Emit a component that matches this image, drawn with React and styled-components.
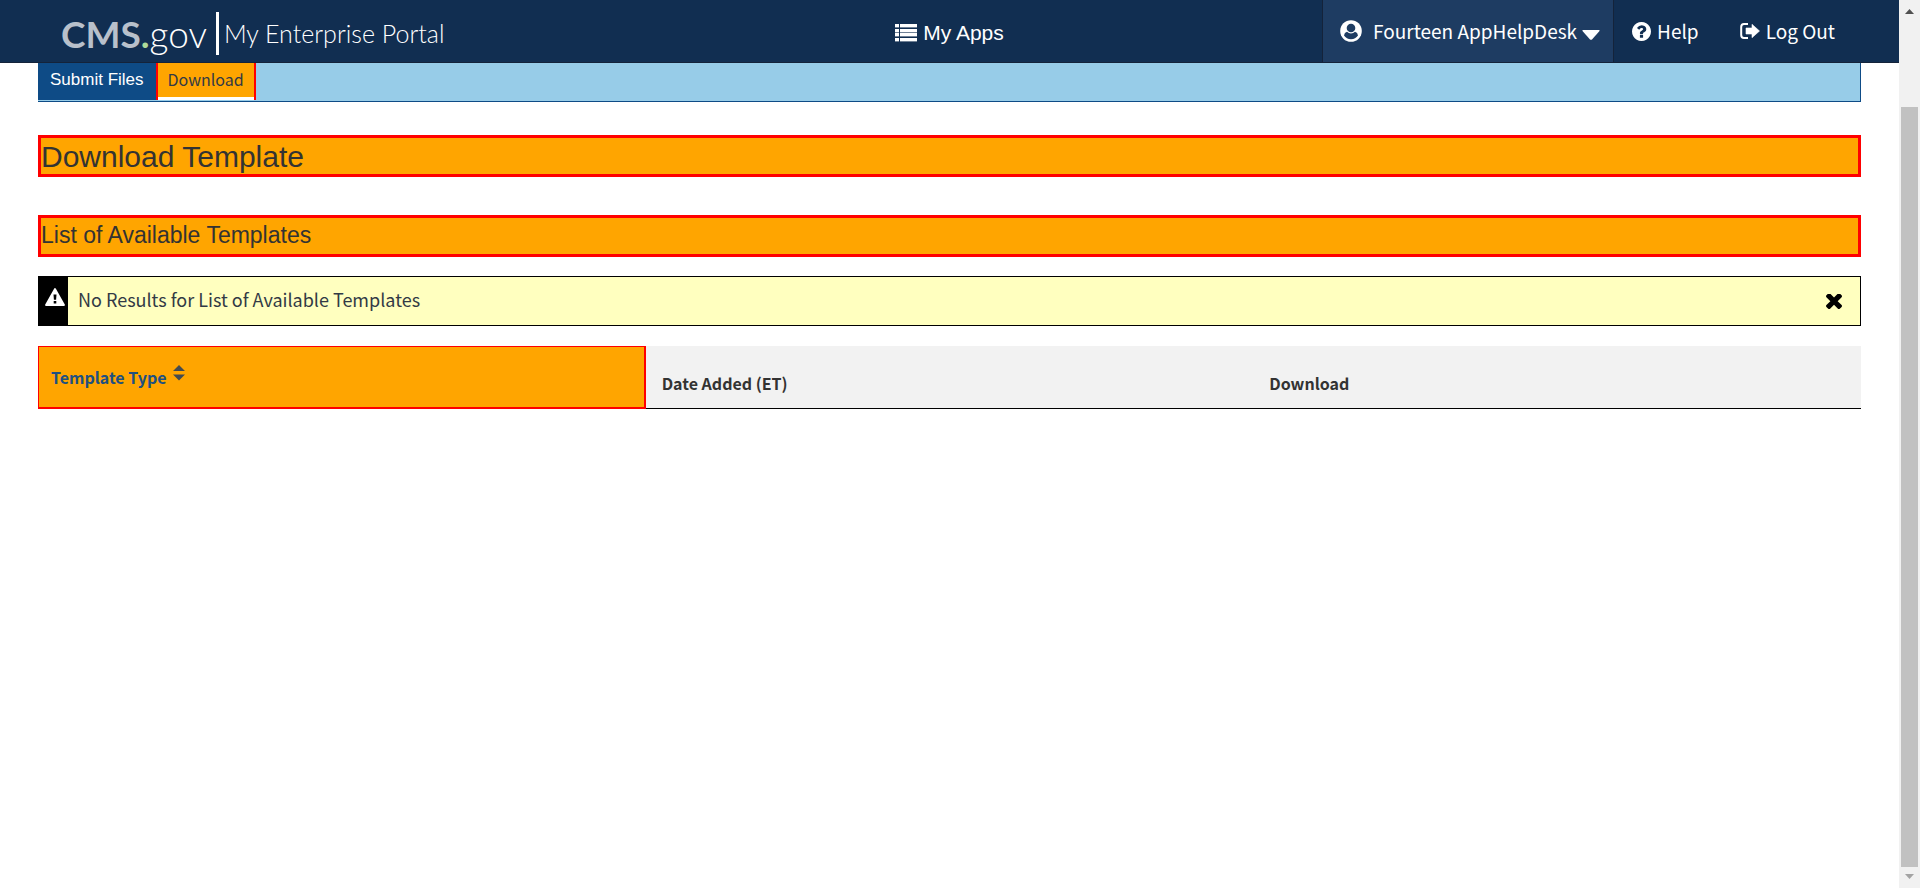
import React from 'react';
import styled, { createGlobalStyle } from 'styled-components';

const arial = '"Liberation Sans", Arial, sans-serif';
const source = '"Source Sans Pro", "Noto Sans CJK SC", sans-serif';

const GlobalStyle = createGlobalStyle`
  *, *::before, *::after { box-sizing: border-box; }
  body { margin: 0; background: #fff; color: #323a45; font-family: ${source}; }
  h1, h2, p { margin: 0; }
  a { color: inherit; text-decoration: none; }
  svg { display: block; flex: none; }
`;

const Shell = styled.div`
  display: flex;
  min-height: 100vh;
`;

const Page = styled.div`
  flex: 1;
  min-width: 0;
`;

const Header = styled.header`
  display: grid;
  grid-template-columns: 1fr auto 1fr;
  height: 63px;
  background: #112e51;
  border-bottom: 1px solid #14233a;
  color: #fff;
`;

const Brand = styled.a`
  display: flex;
  align-items: center;
  padding: 5px 0 0 61px;
  font-family: Lato, sans-serif;
  white-space: nowrap;
`;

const BrandMark = styled.span`
  font-size: 37px;
  line-height: 44px;
  font-weight: 300;
`;

const BrandStrong = styled.span`
  font-weight: 700;
  color: #b8c0cb;
`;

const BrandDot = styled.span`
  font-weight: 700;
  color: #aedb9a;
`;

const BrandRule = styled.span`
  width: 3px;
  height: 43px;
  margin: 0 5px 0 9px;
  background: #fff;
`;

const BrandName = styled.span`
  padding-bottom: 2px;
  font-size: 25px;
  line-height: 30px;
  font-weight: 300;
`;

const AppsLink = styled.a`
  display: flex;
  align-items: center;
  gap: 6px;
  padding-top: 3px;
  font: 500 21px/30px ${arial};
`;

const Account = styled.nav`
  display: flex;
  justify-content: flex-end;
  padding-right: 41px;
`;

const HeaderItem = styled.a`
  display: flex;
  align-items: center;
  gap: 6px;
  padding: 0 23px 0 18px;
  font-size: 19px;
  line-height: 30px;
  white-space: nowrap;
`;

const UserMenu = styled.button`
  display: flex;
  align-items: center;
  padding: 0 13px 0 17px;
  border: 0 solid #14233a;
  border-width: 0 1px;
  background: #1e3c62;
  color: #fff;
  font: 19px/30px ${source};
  white-space: nowrap;
`;

const UserName = styled.span`
  margin: 0 5px 0 11px;
`;

const Main = styled.main`
  padding: 0 38px;
`;

const Tabs = styled.nav`
  display: flex;
  height: 39px;
  padding-bottom: 1px;
  border: 1px solid #0e4b86;
  border-width: 0 1px 1px 0;
  background: #97cce8;
`;

const Tab = styled.a`
  padding: 2px 12px 0;
  font: 500 17px/30px ${arial};
  background: #0e4b86;
  color: #fff;
`;

const ActiveTab = styled(Tab)`
  padding: 1px 10px 0;
  border: solid red;
  border-width: 0 2px;
  background: orange;
  box-shadow: inset 0 -3px #fff;
  color: #323a45;
  font: 16px/30px ${source};
`;

const Title = styled.h1`
  margin-top: 33px;
  padding-top: 1px;
  border: 3px solid red;
  background: orange;
  color: #333;
  font: 400 30px/35px ${arial};
`;

const Subtitle = styled.h2`
  margin-top: 38px;
  padding-bottom: 2px;
  border: 3px solid red;
  background: orange;
  color: #333;
  font: 400 23px/34px ${arial};
`;

const Alert = styled.div`
  display: flex;
  height: 50px;
  margin-top: 19px;
  border: 1px solid #000;
  background: #ffffbf;
`;

const AlertBadge = styled.span`
  width: 29px;
  padding: 10px 0 0 6px;
  background: #000;
  color: #fff;
`;

const AlertText = styled.p`
  flex: 1;
  padding: 7px 0 0 10px;
  font-size: 18px;
  line-height: 30px;
`;

const CloseButton = styled.button`
  display: flex;
  align-items: center;
  padding: 1px 18px 0;
  border: 0;
  background: none;
  color: #000;
`;

const Table = styled.table`
  width: 100%;
  margin-top: 20px;
  border-collapse: separate;
  border-spacing: 0;
  table-layout: fixed;
`;

const HeadCell = styled.th`
  height: 63px;
  padding: 12px 16px 0;
  border-bottom: 1px solid #000;
  background: #f2f2f2;
  color: #333;
  font-size: 16px;
  line-height: 24px;
  font-weight: 700;
  text-align: left;
`;

const SortedCell = styled(HeadCell)`
  padding: 0 12px;
  border: solid red;
  border-width: 1px 2px 2px 1px;
  background: orange;
`;

const SortButton = styled.button`
  display: flex;
  align-items: flex-start;
  gap: 6px;
  padding: 0;
  border: 0;
  background: none;
  color: #205080;
  font: 700 16px/24px ${source};
`;

const ScrollTrack = styled.div`
  position: sticky;
  top: 0;
  display: flex;
  flex-direction: column;
  align-items: center;
  justify-content: space-between;
  width: 21px;
  height: 100vh;
  padding: 9px 0;
  background: #f1f1f1;
`;

const ScrollThumb = styled.div`
  flex: 1;
  width: 17px;
  margin: 93px 0 7px;
  background: #c1c1c1;
`;

const ListIcon = () => (
  <svg width="22" height="18" viewBox="0 0 22 18" fill="currentColor" aria-hidden="true">
    {[0, 5, 9, 14].map((y) => (
      <g key={y}>
        <rect x="0" y={y} width="4" height="3.4" />
        <rect x="5" y={y} width="17" height="3.4" />
      </g>
    ))}
  </svg>
);

const UserIcon = () => (
  <svg width="22" height="22" viewBox="0 0 22 22" aria-hidden="true">
    <circle cx="11" cy="11" r="10.800" fill="currentColor" />
    <circle cx="11" cy="8" r="4.300" fill="#1e3c62" />
    <path d="M4 15.500Q4.300 12.400 7 11.700Q8.700 13.500 11 13.500Q13.300 13.500 15 11.700Q17.700 12.400 18 15.500Q15.500 19.200 11 19.200Q6.500 19.200 4 15.500Z" fill="#1e3c62" />
  </svg>
);

const HelpIcon = () => (
  <svg width="19" height="19" viewBox="0 0 1536 1536" fill="currentColor" aria-hidden="true">
    <path d="M896 1248v-192q0-14-9-23t-23-9h-192q-14 0-23 9t-9 23v192q0 14 9 23t23 9h192q14 0 23-9t9-23zm256-672q0-88-55.500-163t-138.500-116-170-41q-243 0-371 213-15 24 8 42l132 100q7 6 19 6 16 0 25-12 53-68 86-92 34-24 86-24 48 0 85.500 26t37.500 59q0 38-20 61t-68 45q-63 28-115.500 86.500t-52.500 125.500v36q0 14 9 23t23 9h192q14 0 23-9t9-23q0-19 21.500-49.500t54.500-49.500q32-18 49-28.500t46-35 44.500-48 28-60.500 12.500-81zm384 192q0 209-103 385.500t-279.500 279.500-385.500 103-385.500-103-279.500-279.500-103-385.500 103-385.500 279.500-279.500 385.500-103 385.500 103 279.500 279.500 103 385.500z" />
  </svg>
);

const LogOutIcon = () => (
  <svg width="20" height="16" viewBox="0 0 20 16" aria-hidden="true">
    <path d="M8 1.100H4Q1.200 1.100 1.200 4V12Q1.200 14.900 4 14.900H8" fill="none" stroke="currentColor" strokeWidth="2" />
    <path d="M12 1.300L19.500 8L12 14.700V11H6V5H12Z" fill="currentColor" stroke="currentColor" strokeWidth=".6" strokeLinejoin="round" />
  </svg>
);

const CaretIcon = () => (
  <svg width="18" height="17" viewBox="0 0 18 17" fill="currentColor" aria-hidden="true">
    <path d="M1 7H17Q18 7 17.500 8L10 16.400Q9 17.300 8 16.400L.5 8Q0 7 1 7Z" />
  </svg>
);

const WarningIcon = () => (
  <svg width="20" height="20" viewBox="0 0 20 20" aria-hidden="true">
    <path d="M10 2L19 18H1Z" fill="currentColor" stroke="currentColor" strokeWidth="1.800" strokeLinejoin="round" />
    <path d="M8.500 7.500H11.500L11.100 12.800H8.900ZM8.700 14H11.300V16.400H8.700Z" fill="#000" />
  </svg>
);

const CloseIcon = () => (
  <svg width="16" height="16" viewBox="300 430 1190 1190" fill="currentColor" aria-hidden="true">
    <path d="M1490 1322q0 40-28 68l-136 136q-28 28-68 28t-68-28l-294-294-294 294q-28 28-68 28t-68-28l-136-136q-28-28-28-68t28-68l294-294-294-294q-28-28-28-68t28-68l136-136q28-28 68-28t68 28l294 294 294-294q28-28 68-28t68 28l136 136q28 28 28 68t-28 68l-294 294 294 294q28 28 28 68z" />
  </svg>
);

const SortIcon = () => (
  <svg width="12" height="16" viewBox="0 0 12 16" fill="#444b50" aria-hidden="true">
    <path d="M6 0L12 6H0ZM0 9.500H12L6 15.500Z" />
  </svg>
);

const ScrollArrow = ({ down }) => (
  <svg width="9" height="5" viewBox="0 0 9 5" fill={down ? '#a3a3a3' : '#505050'} aria-hidden="true">
    <path d={down ? 'M0 0H9L4.500 5Z' : 'M0 5H9L4.500 0Z'} />
  </svg>
);

export default function App() {
  return (
    <>
      <GlobalStyle />
      <Shell>
        <Page>
          <Header>
            <Brand href="#home">
              <BrandMark>
                <BrandStrong>CMS</BrandStrong>
                <BrandDot>.</BrandDot>gov
              </BrandMark>
              <BrandRule />
              <BrandName>My Enterprise Portal</BrandName>
            </Brand>
            <AppsLink href="#apps">
              <ListIcon />
              My Apps
            </AppsLink>
            <Account>
              <UserMenu type="button">
                <UserIcon />
                <UserName>Fourteen AppHelpDesk</UserName>
                <CaretIcon />
              </UserMenu>
              <HeaderItem href="#help">
                <HelpIcon />
                Help
              </HeaderItem>
              <HeaderItem href="#logout">
                <LogOutIcon />
                Log Out
              </HeaderItem>
            </Account>
          </Header>
          <Main>
            <Tabs>
              <Tab href="#submit">Submit Files</Tab>
              <ActiveTab href="#download">Download</ActiveTab>
            </Tabs>
            <Title>Download Template</Title>
            <Subtitle>List of Available Templates</Subtitle>
            <Alert role="alert">
              <AlertBadge>
                <WarningIcon />
              </AlertBadge>
              <AlertText>No Results for List of Available Templates</AlertText>
              <CloseButton type="button" aria-label="Close">
                <CloseIcon />
              </CloseButton>
            </Alert>
            <Table>
              <thead>
                <tr>
                  <SortedCell scope="col">
                    <SortButton type="button">
                      Template Type
                      <SortIcon />
                    </SortButton>
                  </SortedCell>
                  <HeadCell scope="col">Date Added (ET)</HeadCell>
                  <HeadCell scope="col">Download</HeadCell>
                </tr>
              </thead>
            </Table>
          </Main>
        </Page>
        <ScrollTrack aria-hidden="true">
          <ScrollArrow />
          <ScrollThumb />
          <ScrollArrow down />
        </ScrollTrack>
      </Shell>
    </>
  );
}
